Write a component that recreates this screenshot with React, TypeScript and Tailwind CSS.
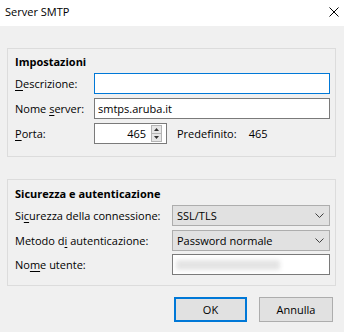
import React from "react";

function U({ children }: { children: React.ReactNode }) {
  return <span className="underline underline-offset-[2px] decoration-[1px]">{children}</span>;
}

function Chevron() {
  return (
    <svg width="9" height="5" viewBox="0 0 9 5" className="mr-[5px]">
      <path d="M0.5 0.5 L4.5 4.5 L8.5 0.5" fill="none" stroke="#404040" strokeWidth="1" />
    </svg>
  );
}

export default function App() {
  return (
    <div className="w-[344px] h-[332px] bg-[#f0f0f0] flex flex-col font-['Open_Sans',sans-serif] text-[11px] text-black overflow-hidden">
      <div className="h-[26px] shrink-0 bg-white flex items-start justify-between">
        <span className="pl-[5px] pt-[4px] leading-[16px]">Server SMTP</span>
        <svg width="10" height="10" viewBox="0 0 10 10" className="mt-[7px] mr-[5px]">
          <path d="M0.5 0.5 L9.5 9.5 M9.5 0.5 L0.5 9.5" stroke="#000" strokeWidth="1" />
        </svg>
      </div>

      <div className="mt-[22px] ml-[7px] w-[329px] h-[109px] border border-[#dcdcdc] pl-[7px] pr-[5px] pt-[5px] flex flex-col">
        <div className="h-[16px] leading-[16px] font-bold">Impostazioni</div>
        <div className="mt-[3px] flex flex-col gap-[4px]">
          <div className="flex items-center h-[21px]">
            <span className="w-[79px] leading-[16px]">
              <U>D</U>escrizione:
            </span>
            <div className="w-[236px] h-[21px] bg-white border border-[#0078d7]" />
          </div>
          <div className="flex items-center h-[21px]">
            <span className="w-[79px] leading-[16px]">
              Nome <U>s</U>erver:
            </span>
            <div className="w-[236px] h-[21px] bg-white border border-[#7a7a7a] flex items-center pl-[3px] leading-[16px]">
              smtps.aruba.it
            </div>
          </div>
          <div className="flex items-center h-[21px]">
            <span className="w-[79px] leading-[16px]">
              <U>P</U>orta:
            </span>
            <div className="w-[73px] h-[21px] bg-white border border-[#7a7a7a] flex items-center justify-end pr-[4px]">
              <span className="leading-[16px] mr-[5px]">465</span>
              <svg width="11" height="17" viewBox="0 0 11 17">
                <rect x="0.5" y="0.5" width="10" height="16" fill="#e6e6e6" stroke="#b4b4b4" />
                <line x1="1" y1="8.5" x2="10" y2="8.5" stroke="#b4b4b4" />
                <path d="M3 6 L5.5 3 L8 6 Z" fill="#333" />
                <path d="M3 11 L5.5 14 L8 11 Z" fill="#333" />
              </svg>
            </div>
            <span className="ml-[10px] leading-[16px]">Predefinito:</span>
            <span className="ml-[12px] leading-[16px]">465</span>
          </div>
        </div>
      </div>

      <div className="mt-[22px] ml-[7px] w-[329px] h-[107px] border border-[#dcdcdc] pl-[7px] pr-[5px] pt-[6px] flex flex-col">
        <div className="h-[16px] leading-[16px] font-bold">Sicurezza e autenticazione</div>
        <div className="mt-[3px] flex flex-col">
          <div className="flex items-center h-[21px]">
            <span className="w-[157px] leading-[16px]">
              Si<U>c</U>urezza della connessione:
            </span>
            <div className="w-[158px] h-[21px] bg-[#e1e1e1] border border-[#adadad] flex items-center justify-between pl-[4px]">
              <span className="leading-[16px]">SSL/TLS</span>
              <Chevron />
            </div>
          </div>
          <div className="flex items-center h-[21px] mt-[4px]">
            <span className="w-[157px] leading-[16px]">
              Metodo d<U>i</U> autenticazione:
            </span>
            <div className="w-[158px] h-[21px] bg-[#e1e1e1] border border-[#adadad] flex items-center justify-between pl-[4px]">
              <span className="leading-[16px]">Password normale</span>
              <Chevron />
            </div>
          </div>
          <div className="flex items-center h-[21px] mt-[3px]">
            <span className="w-[157px] leading-[16px]">
              No<U>m</U>e utente:
            </span>
            <div className="w-[158px] h-[21px] bg-white border border-[#7a7a7a] flex items-center pl-[3px]">
              <div className="w-[104px] h-[10px] bg-[#e4e4e4] blur-[2px] rounded-[2px]" />
            </div>
          </div>
        </div>
      </div>

      <div className="mt-[11px] flex justify-end pr-[11px] gap-[12px]">
        <button className="w-[73px] h-[25px] bg-[#e1e1e1] border-2 border-[#0078d7] flex items-center justify-center leading-[16px]">
          OK
        </button>
        <button className="w-[74px] h-[25px] bg-[#e1e1e1] border border-[#adadad] flex items-center justify-center leading-[16px]">
          Annulla
        </button>
      </div>
    </div>
  );
}
